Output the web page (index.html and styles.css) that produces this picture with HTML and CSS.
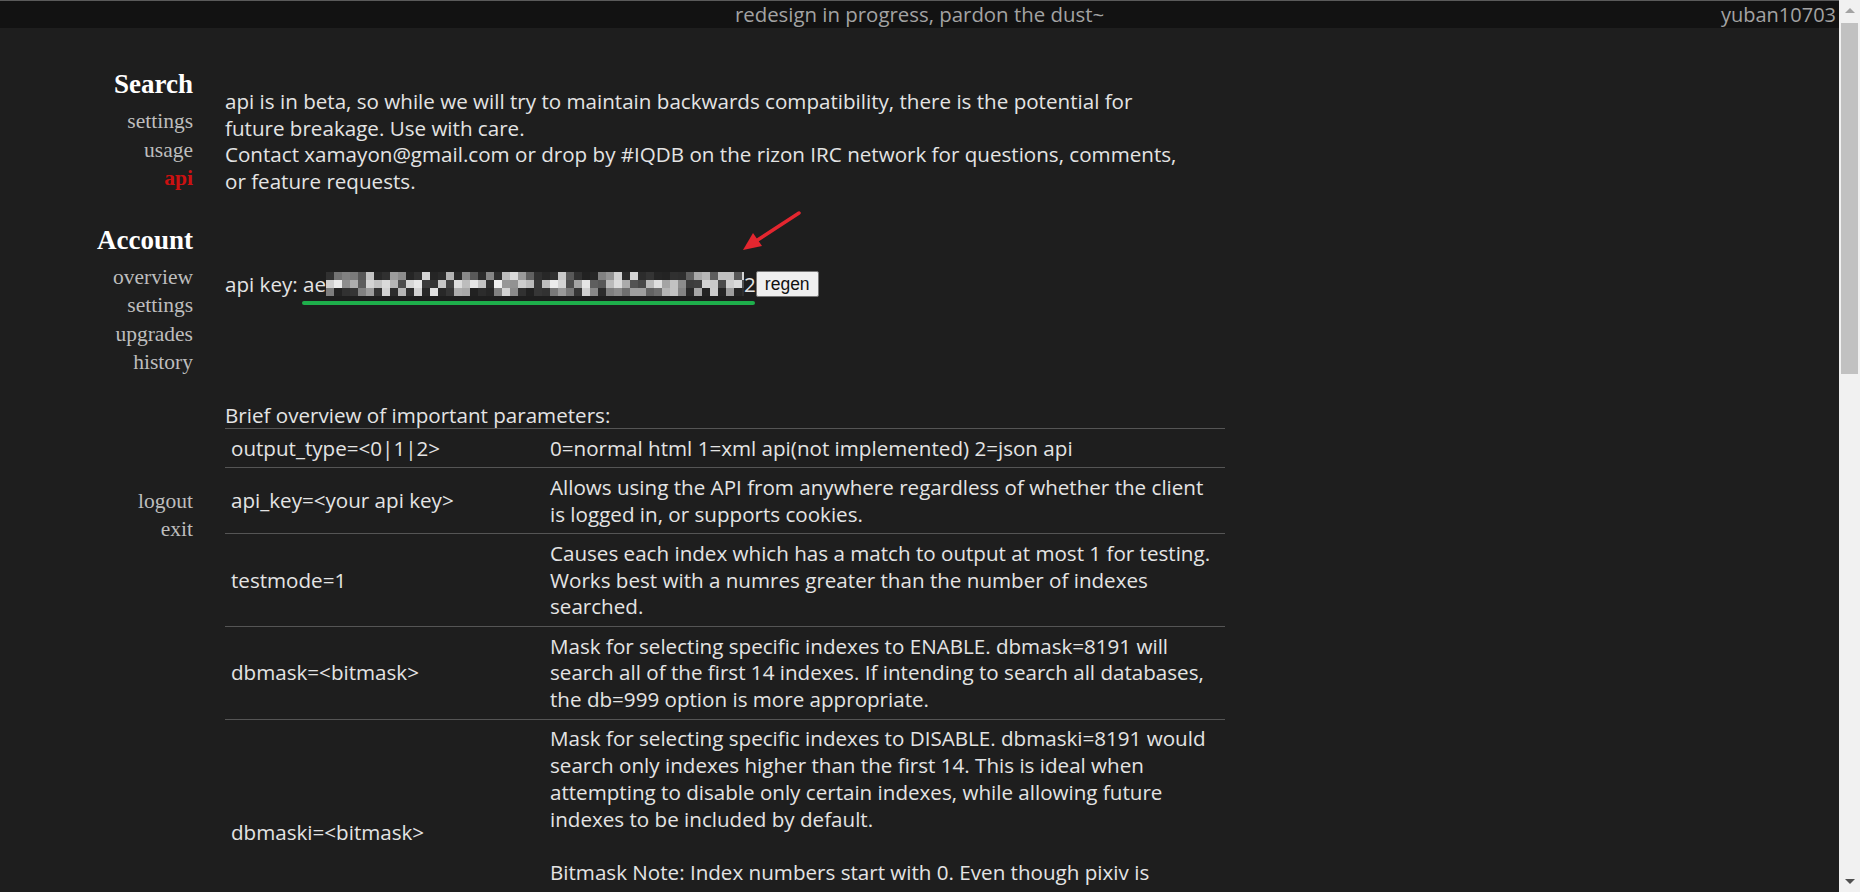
FILE: index.html
```html
<!DOCTYPE html>
<html lang="en">
<head>
<meta charset="utf-8">
<title>api</title>
<link rel="stylesheet" href="styles.css">
</head>
<body>
<div class="viewport">
  <div class="page">
    <header class="topbar">
      <span></span>
      <span class="notice">redesign in progress, pardon the dust~</span>
      <span class="user">yuban10703</span>
    </header>
    <div class="layout">
      <nav class="sidebar">
        <div class="nav-group">
          <h2 class="nav-title">Search</h2>
          <a class="nav-link">settings</a>
          <a class="nav-link">usage</a>
          <a class="nav-link active">api</a>
        </div>
        <div class="nav-group account">
          <h2 class="nav-title">Account</h2>
          <a class="nav-link">overview</a>
          <a class="nav-link">settings</a>
          <a class="nav-link">upgrades</a>
          <a class="nav-link">history</a>
        </div>
        <div class="nav-group misc">
          <a class="nav-link">logout</a>
          <a class="nav-link">exit</a>
        </div>
      </nav>
      <main class="content">
        <p class="intro">api is in beta, so while we will try to maintain backwards compatibility, there is the potential for<br>future breakage. Use with care.<br>Contact xamayon@gmail.com or drop by #IQDB on the rizon IRC network for questions, comments,<br>or feature requests.</p>
        <div class="apikey-row">
          <span class="label">api key: ae</span><svg class="mosaic" width="418" height="24" viewBox="0 0 418 24"></svg><span class="label">2</span><button class="regen">regen</button>
          <span class="underline"></span>
          <svg class="arrow" width="75" height="50" viewBox="0 0 75 50">
            <line x1="64" y1="7" x2="21" y2="35" stroke="#e3262f" stroke-width="3.5" stroke-linecap="round"/>
            <polygon points="8,44 27,40 18,27" fill="#e3262f"/>
          </svg>
        </div>
        <table class="params">
          <caption>Brief overview of important parameters:</caption>
          <tr>
            <td class="pname">output_type=&lt;0|1|2&gt;</td>
            <td>0=normal html 1=xml api(not implemented) 2=json api</td>
          </tr>
          <tr>
            <td class="pname">api_key=&lt;your api key&gt;</td>
            <td>Allows using the API from anywhere regardless of whether the client<br>is logged in, or supports cookies.</td>
          </tr>
          <tr>
            <td class="pname">testmode=1</td>
            <td>Causes each index which has a match to output at most 1 for testing.<br>Works best with a numres greater than the number of indexes<br>searched.</td>
          </tr>
          <tr>
            <td class="pname">dbmask=&lt;bitmask&gt;</td>
            <td>Mask for selecting specific indexes to ENABLE. dbmask=8191 will<br>search all of the first 14 indexes. If intending to search all databases,<br>the db=999 option is more appropriate.</td>
          </tr>
          <tr>
            <td class="pname">dbmaski=&lt;bitmask&gt;</td>
            <td>Mask for selecting specific indexes to DISABLE. dbmaski=8191 would<br>search only indexes higher than the first 14. This is ideal when<br>attempting to disable only certain indexes, while allowing future<br>indexes to be included by default.<br><br>Bitmask Note: Index numbers start with 0. Even though pixiv is<br>labeled as index 5, it would be controlled with the 6th bit position,<br>which has a decimal value of 32.</td>
          </tr>
        </table>
      </main>
    </div>
  </div>
  <div class="scrollbar">
    <div class="sb-btn"><span class="tri-up"></span></div>
    <div class="sb-thumb"></div>
    <div class="sb-fill"></div>
    <div class="sb-btn"><span class="tri-down"></span></div>
  </div>
</div>
<script src="script.js"></script>
</body>
</html>
```

FILE: styles.css
```css
html, body {
  margin: 0;
  padding: 0;
  height: 100%;
  overflow: hidden;
}

body {
  background: #1e1e1e;
  color: #e4e4e4;
  font-family: "Open Sans", "Noto Sans", sans-serif;
  font-size: 20.6px;
}

.viewport {
  display: flex;
  height: 100vh;
}

.page {
  flex: 1;
  min-width: 0;
  overflow: hidden;
}

.topbar {
  display: grid;
  grid-template-columns: 1fr auto 1fr;
  height: 27px;
  line-height: 27px;
  background: #121212;
  border-top: 1px solid #5a5a5a;
  color: #a3a3a3;
  font-size: 20.4px;
}

.notice {
  white-space: nowrap;
}

.user {
  justify-self: end;
  padding-right: 3px;
  font-size: 20px;
}

.layout {
  display: flex;
  padding-top: 40px;
}

.sidebar {
  width: 193px;
  flex-shrink: 0;
  text-align: right;
  font-family: "Liberation Serif", "Times New Roman", serif;
}

.nav-group {
  display: flex;
  flex-direction: column;
}

.nav-group.account {
  margin-top: 31px;
}

.nav-group.misc {
  margin-top: 110px;
}

.nav-title {
  margin: 0 0 7px;
  font-size: 27px;
  line-height: 32px;
  font-weight: bold;
  color: #ffffff;
}

.nav-link {
  display: block;
  font-size: 21.5px;
  line-height: 28.5px;
  color: #bdbdbd;
}

.nav-link.active {
  color: #cc1111;
  font-weight: bold;
}

.content {
  margin-left: 32px;
  width: 1000px;
  padding-top: 20px;
}

.intro {
  margin: 0;
  line-height: 26.5px;
  white-space: nowrap;
}

.apikey-row {
  position: relative;
  display: flex;
  align-items: center;
  height: 26.5px;
  margin-top: 77px;
  line-height: 26.5px;
}

.label {
  white-space: pre;
}

.mosaic {
  display: block;
}

.regen {
  height: 26px;
  padding: 0 8px;
  margin-left: 0;
  font-family: "Liberation Sans", Arial, sans-serif;
  font-size: 17.5px;
  color: #111;
  background: #efefef;
  border: 1px solid #767676;
  border-radius: 2px;
}

.underline {
  position: absolute;
  left: 77px;
  top: 29.5px;
  width: 453px;
  height: 4px;
  border-radius: 2px;
  background: #1eae4b;
}

.arrow {
  position: absolute;
  left: 510px;
  top: -65px;
}

.params {
  width: 1000px;
  margin-top: 104px;
  border-collapse: collapse;
}

.params caption {
  text-align: left;
  line-height: 26.5px;
  padding: 0;
}

.params td {
  border-top: 1px solid #555;
  padding: 5.7px 6px;
  line-height: 26.8px;
  vertical-align: middle;
  white-space: nowrap;
}

.params td.pname {
  width: 307px;
}

.scrollbar {
  width: 21px;
  flex-shrink: 0;
  display: flex;
  flex-direction: column;
  background: #f1f1f1;
}

.sb-btn {
  height: 21px;
  display: flex;
  align-items: center;
  justify-content: center;
}

.tri-up {
  width: 0;
  height: 0;
  border-left: 5px solid transparent;
  border-right: 5px solid transparent;
  border-bottom: 5px solid #a3a3a3;
}

.tri-down {
  width: 0;
  height: 0;
  border-left: 5px solid transparent;
  border-right: 5px solid transparent;
  border-top: 5px solid #505050;
}

.sb-thumb {
  height: 351px;
  margin: 2px 2px 0;
  background: #c1c1c1;
}

.sb-fill {
  flex: 1;
}
```

FILE: script.js
```js
(function () {
  var svg = document.querySelector('.mosaic');
  var ns = 'http://www.w3.org/2000/svg';
  var seed = 20240611;
  function rnd() {
    seed = (seed * 1103515245 + 12345) % 2147483648;
    return seed / 2147483648;
  }
  var size = 8, rows = 3;
  var cols = Math.ceil(418 / size);
  for (var r = 0; r < rows; r++) {
    for (var c = 0; c < cols; c++) {
      var p = rnd();
      var v;
      if (r === 1) {
        v = p < 0.25 ? 45 + Math.round(rnd() * 50) : 140 + Math.round(rnd() * 100);
      } else {
        v = p < 0.4 ? 32 + Math.round(rnd() * 22) : 85 + Math.round(rnd() * 140);
      }
      var rect = document.createElementNS(ns, 'rect');
      rect.setAttribute('x', c * size);
      rect.setAttribute('y', r * size);
      rect.setAttribute('width', size);
      rect.setAttribute('height', size);
      rect.setAttribute('fill', 'rgb(' + v + ',' + v + ',' + v + ')');
      svg.appendChild(rect);
    }
  }
})();
```
